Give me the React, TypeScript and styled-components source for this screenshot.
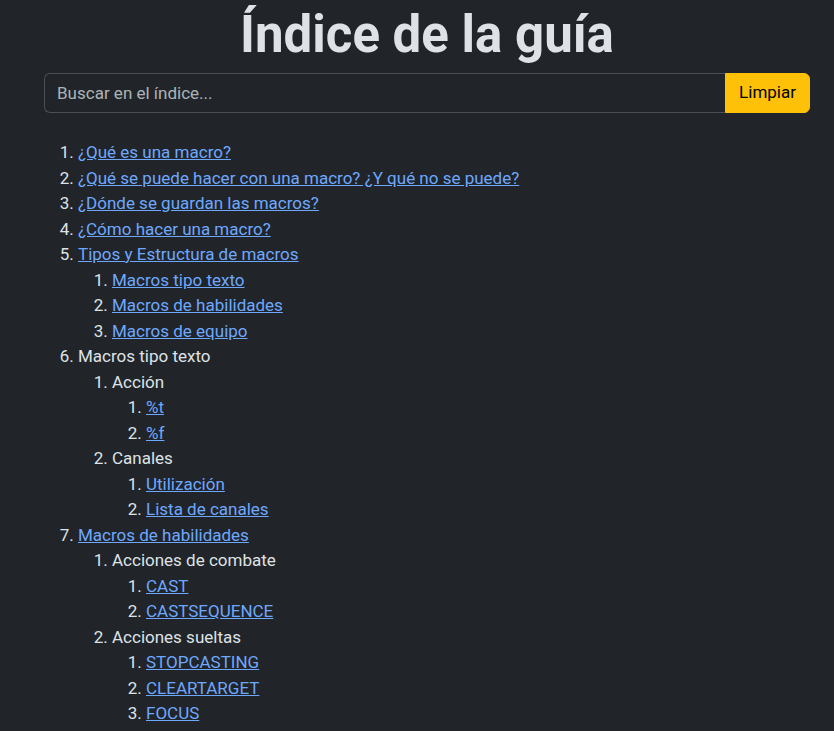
import React from "react";
import styled, { createGlobalStyle } from "styled-components";

const Global = createGlobalStyle`
  html, body { margin: 0; padding: 0; background: #212529; }
  body {
    font-family: Roboto, "Noto Sans", "Liberation Sans", sans-serif;
    font-size: 17px;
    line-height: 1.5;
    color: #dee2e6;
  }
  * { box-sizing: border-box; }
`;

const Page = styled.div`
  padding: 0 24px 0 44px;
`;

const Title = styled.h1`
  margin: 0 0 8px;
  padding-top: 4px;
  text-align: center;
  font-size: 51px;
  font-weight: 700;
  line-height: 61px;
  color: #dee2e6;
`;

const SearchGroup = styled.div`
  display: flex;
  align-items: stretch;
  margin-bottom: 27px;
`;

const SearchInput = styled.input`
  flex: 1;
  min-width: 0;
  height: 40px;
  padding: 6px 12px;
  font: inherit;
  font-size: 17px;
  color: #dee2e6;
  background: #212529;
  border: 1px solid #495057;
  border-right: none;
  border-radius: 6px 0 0 6px;
  outline: none;
  &::placeholder { color: rgba(222, 226, 230, 0.75); }
`;

const ClearButton = styled.button`
  height: 40px;
  padding: 6px 13px;
  font: inherit;
  font-size: 17px;
  color: #000;
  background: #ffc107;
  border: 1px solid #ffc107;
  border-radius: 0 6px 6px 0;
`;

const List = styled.ol`
  margin: 0;
  padding-left: 34px;
  list-style: decimal;
  li::marker { color: #dee2e6; }
`;

const Item = styled.li``;

const Link = styled.a`
  color: #6ea8fe;
  text-decoration: underline;
`;

type Node = { label: string; link?: boolean; children?: Node[] };

const toc: Node[] = [
  { label: "¿Qué es una macro?", link: true },
  { label: "¿Qué se puede hacer con una macro? ¿Y qué no se puede?", link: true },
  { label: "¿Dónde se guardan las macros?", link: true },
  { label: "¿Cómo hacer una macro?", link: true },
  {
    label: "Tipos y Estructura de macros",
    link: true,
    children: [
      { label: "Macros tipo texto", link: true },
      { label: "Macros de habilidades", link: true },
      { label: "Macros de equipo", link: true },
    ],
  },
  {
    label: "Macros tipo texto",
    children: [
      { label: "Acción", children: [{ label: "%t", link: true }, { label: "%f", link: true }] },
      {
        label: "Canales",
        children: [
          { label: "Utilización", link: true },
          { label: "Lista de canales", link: true },
        ],
      },
    ],
  },
  {
    label: "Macros de habilidades",
    link: true,
    children: [
      {
        label: "Acciones de combate",
        children: [
          { label: "CAST", link: true },
          { label: "CASTSEQUENCE", link: true },
        ],
      },
      {
        label: "Acciones sueltas",
        children: [
          { label: "STOPCASTING", link: true },
          { label: "CLEARTARGET", link: true },
          { label: "FOCUS", link: true },
        ],
      },
    ],
  },
];

const Tree: React.FC<{ nodes: Node[] }> = ({ nodes }) => (
  <List>
    {nodes.map((n, i) => (
      <Item key={i}>
        {n.link ? <Link href="#">{n.label}</Link> : n.label}
        {n.children && <Tree nodes={n.children} />}
      </Item>
    ))}
  </List>
);

export default function App() {
  return (
    <Page>
      <Global />
      <Title>Índice de la guía</Title>
      <SearchGroup>
        <SearchInput placeholder="Buscar en el índice..." />
        <ClearButton>Limpiar</ClearButton>
      </SearchGroup>
      <Tree nodes={toc} />
    </Page>
  );
}
